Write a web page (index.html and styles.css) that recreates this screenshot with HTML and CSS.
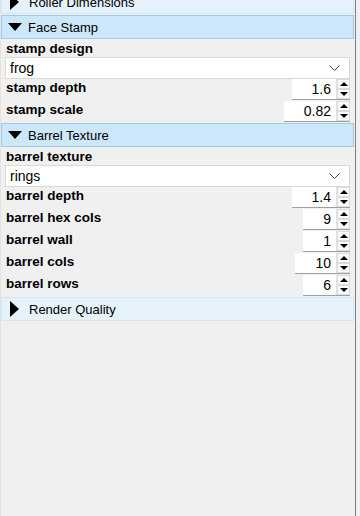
FILE: index.html
```html
<!DOCTYPE html>
<html lang="en">
<head>
    <meta charset="UTF-8">
    <meta name="viewport" content="width=device-width, initial-scale=1.0">
    <title>Roller Settings</title>
    <link rel="stylesheet" href="styles.css">
</head>
<body>
    <div class="panel">
        <div class="section first">
            <div class="sec-head"><span class="tri tri-right"></span>Roller Dimensions</div>
        </div>

        <div class="section">
            <div class="sec-head open"><span class="tri tri-down"></span>Face Stamp</div>
            <div class="sec-body">
                <div class="field-label">stamp design</div>
                <div class="select">
                    <span>frog</span>
                    <svg class="chev" width="11" height="6" viewBox="0 0 11 6"><path d="M0.5 0.5 L5.5 5.5 L10.5 0.5" fill="none" stroke="#444" stroke-width="1"/></svg>
                </div>
                <div class="row">
                    <span class="label">stamp depth</span>
                    <div class="spin"><span class="val">1.6</span><span class="arrows"><span class="up"></span><span class="down"></span></span></div>
                </div>
                <div class="row">
                    <span class="label">stamp scale</span>
                    <div class="spin"><span class="val">0.82</span><span class="arrows"><span class="up"></span><span class="down"></span></span></div>
                </div>
            </div>
        </div>

        <div class="section">
            <div class="sec-head open"><span class="tri tri-down"></span>Barrel Texture</div>
            <div class="sec-body">
                <div class="field-label">barrel texture</div>
                <div class="select">
                    <span>rings</span>
                    <svg class="chev" width="11" height="6" viewBox="0 0 11 6"><path d="M0.5 0.5 L5.5 5.5 L10.5 0.5" fill="none" stroke="#444" stroke-width="1"/></svg>
                </div>
                <div class="row">
                    <span class="label">barrel depth</span>
                    <div class="spin"><span class="val">1.4</span><span class="arrows"><span class="up"></span><span class="down"></span></span></div>
                </div>
                <div class="row">
                    <span class="label">barrel hex cols</span>
                    <div class="spin"><span class="val">9</span><span class="arrows"><span class="up"></span><span class="down"></span></span></div>
                </div>
                <div class="row">
                    <span class="label">barrel wall</span>
                    <div class="spin"><span class="val">1</span><span class="arrows"><span class="up"></span><span class="down"></span></span></div>
                </div>
                <div class="row">
                    <span class="label">barrel cols</span>
                    <div class="spin"><span class="val">10</span><span class="arrows"><span class="up"></span><span class="down"></span></span></div>
                </div>
                <div class="row">
                    <span class="label">barrel rows</span>
                    <div class="spin"><span class="val">6</span><span class="arrows"><span class="up"></span><span class="down"></span></span></div>
                </div>
            </div>
        </div>

        <div class="section">
            <div class="sec-head"><span class="tri tri-right"></span>Render Quality</div>
        </div>
    </div>
</body>
</html>
```

FILE: styles.css
```css
* {
    margin: 0;
    padding: 0;
    box-sizing: border-box;
}

html, body {
    height: 100%;
}

body {
    font-family: "Liberation Sans", Arial, sans-serif;
    font-size: 13px;
    color: #000;
    background: #f0f0f0;
    overflow: hidden;
}

/* panel is scrolled a little: the first header is half hidden */
.panel {
    width: 356px;
    height: calc(100% + 10px);
    margin-top: -10px;
    border-left: 1px solid #e3e3e3;
    border-right: 1px solid #7f7f7f;
    padding-right: 1px;
}

.sec-head {
    height: 24px;
    display: flex;
    align-items: center;
    padding-left: 7px;
    background: #e5f1fb;
    border: 1px solid #d3e6f5;
    margin-bottom: 1px;
}

.sec-head.open {
    background: #cce6fa;
    border-color: #9fcbe9;
}

.tri {
    width: 0;
    height: 0;
    margin-right: 10px;
}

.tri-right {
    border-top: 8px solid transparent;
    border-bottom: 8px solid transparent;
    border-left: 9px solid #000;
    margin-left: 1px;
}

.tri-down {
    border-left: 7.5px solid transparent;
    border-right: 7.5px solid transparent;
    border-top: 8px solid #000;
    margin-left: -1px;
    margin-right: 6px;
}

.sec-body {
    padding: 0 4px 0 4px;
}

.field-label,
.label {
    font-weight: bold;
    font-size: 13.5px;
}

.field-label {
    height: 17px;
    line-height: 17px;
    padding-left: 1px;
}

.select {
    height: 22px;
    background: #fff;
    border: 1px solid #d9d9d9;
    display: flex;
    align-items: center;
    justify-content: space-between;
    padding: 0 9px 0 4px;
    font-size: 14px;
}

.row {
    height: 22px;
    display: flex;
    align-items: flex-start;
    justify-content: space-between;
    padding-left: 1px;
}

.label {
    line-height: 18px;
}

.spin {
    display: flex;
    height: 21px;
    border-bottom: 1px solid #a0a0a0;
    background: #fff;
}

.val {
    padding: 0 5px 0 20px;
    line-height: 20px;
    font-size: 14px;
}

.arrows {
    width: 14px;
    display: flex;
    flex-direction: column;
    background: #f0f0f0;
    border-left: 1px solid #e3e3e3;
}

.arrows span {
    flex: 1;
    display: flex;
    align-items: center;
    justify-content: center;
    border: 1px solid #dcdcdc;
    background: #fafafa;
}

.arrows .up::before {
    content: "";
    border-left: 4px solid transparent;
    border-right: 4px solid transparent;
    border-bottom: 4px solid #000;
}

.arrows .down::before {
    content: "";
    border-left: 4px solid transparent;
    border-right: 4px solid transparent;
    border-top: 4px solid #000;
}
```
